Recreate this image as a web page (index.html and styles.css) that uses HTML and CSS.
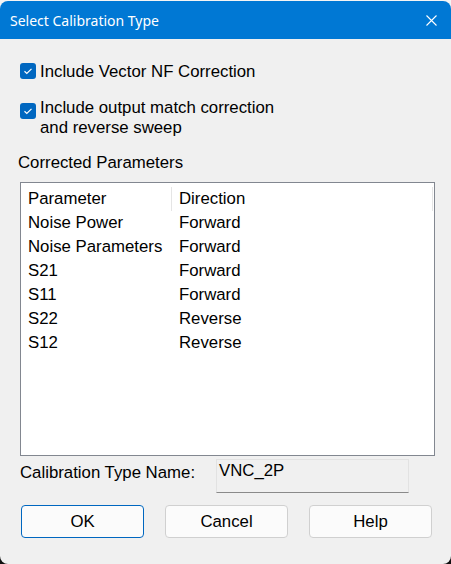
FILE: index.html
```html
<!DOCTYPE html>
<html>
<head>
<meta charset="utf-8">
<link rel="stylesheet" href="styles.css">
</head>
<body>
<div class="window">
  <div class="titlebar">
    <span class="title">Select Calibration Type</span>
    <svg class="close" width="11" height="11" viewBox="0 0 11 11"><path d="M0.5 0.5 L10.5 10.5 M10.5 0.5 L0.5 10.5" stroke="#fff" stroke-width="1.1" fill="none"/></svg>
  </div>
  <div class="content">
    <label class="check row1">
      <span class="box"><svg width="16" height="16" viewBox="0 0 16 16"><path d="M4.5 8.3 L6.8 10.5 L11.5 5.8" stroke="#fff" stroke-width="1.2" fill="none"/></svg></span>
      <span class="ctext">Include Vector NF Correction</span>
    </label>
    <label class="check row2">
      <span class="box"><svg width="16" height="16" viewBox="0 0 16 16"><path d="M4.5 8.3 L6.8 10.5 L11.5 5.8" stroke="#fff" stroke-width="1.2" fill="none"/></svg></span>
      <span class="ctext">Include output match correction<br>and reverse sweep</span>
    </label>
    <div class="section">Corrected Parameters</div>
    <div class="list">
      <div class="lrow head">
        <div class="cell h1">Parameter</div>
        <div class="cell h2">Direction</div>
      </div>
      <div class="lrow"><div class="cell">Noise Power</div><div class="cell c2">Forward</div></div>
      <div class="lrow"><div class="cell">Noise Parameters</div><div class="cell c2">Forward</div></div>
      <div class="lrow"><div class="cell">S21</div><div class="cell c2">Forward</div></div>
      <div class="lrow"><div class="cell">S11</div><div class="cell c2">Forward</div></div>
      <div class="lrow"><div class="cell">S22</div><div class="cell c2">Reverse</div></div>
      <div class="lrow"><div class="cell">S12</div><div class="cell c2">Reverse</div></div>
    </div>
    <div class="namerow">
      <div class="namelabel">Calibration Type Name:</div>
      <div class="namefield">VNC_2P</div>
    </div>
    <div class="buttons">
      <button class="btn primary">OK</button>
      <button class="btn">Cancel</button>
      <button class="btn">Help</button>
    </div>
  </div>
</div>
</body>
</html>
```
FILE: styles.css
```css
html, body {
  margin: 0;
  padding: 0;
}
body {
  width: 451px;
  height: 564px;
  overflow: hidden;
  background: linear-gradient(#f4f4f4 50%, #101010 50%);
  font-family: "Liberation Sans", Arial, sans-serif;
  font-size: 16.8px;
  color: #000;
}
.window {
  margin-top: 1px;
  height: 563px;
  background: #f0f0f0;
  border-radius: 8px;
  overflow: hidden;
  display: flex;
  flex-direction: column;
}
.titlebar {
  height: 38px;
  flex: none;
  background: #0078d4;
  display: flex;
  align-items: center;
  justify-content: space-between;
  padding: 0 14px 0 10px;
}
.title {
  font-family: "Noto Sans", "Open Sans", sans-serif;
  font-size: 14px;
  color: #fff;
  margin-top: 1px;
}
.close {
  display: block;
  margin-top: 1px;
}
.content {
  padding: 23px 0 0 20px;
  display: flex;
  flex-direction: column;
  line-height: 20px;
}
.check {
  display: flex;
  align-items: flex-start;
}
.box {
  width: 16px;
  height: 16px;
  border-radius: 3px;
  background: #0067c0;
  flex: none;
  margin-right: 4px;
}
.box svg { display: block; }
.row1 .box { margin-top: 1px; }
.row2 { margin-top: 16px; }
.row2 .box { margin-top: 5px; }
.section {
  margin-top: 15px;
  margin-left: -2px;
}
.list {
  margin-top: 9px;
  width: 413px;
  height: 268px;
  border: 1px solid #828790;
  background: #fff;
  padding-top: 4px;
  box-sizing: content-box;
}
.lrow {
  display: grid;
  grid-template-columns: 151px 261px;
  height: 24px;
  line-height: 24px;
}
.cell {
  padding-left: 7px;
  white-space: nowrap;
}
.head .h1, .head .h2 {
  border-right: 1px solid #e5e5e5;
}
.c2, .h2 { padding-left: 7px; }
.namerow {
  margin-top: 3px;
  display: flex;
}
.namelabel {
  width: 196px;
  padding-top: 4px;
}
.namefield {
  width: 189px;
  height: 31px;
  padding-left: 2px;
  padding-top: 1px;
  border: 1px solid #e2e2e2;
  border-bottom-color: #8a8a8a;
  background: #f0f0f0;
}
.buttons {
  margin-top: 12px;
  width: 412px;
  display: flex;
  justify-content: space-between;
}
.btn {
  width: 123px;
  height: 33px;
  font-family: "Liberation Sans", Arial, sans-serif;
  font-size: 16.8px;
  color: #000;
  background: #fbfbfb;
  border: 1px solid #d0d0d0;
  border-radius: 4px;
  padding: 0;
}
.btn.primary {
  border-color: #0067c0;
}
.btn:first-child { margin-left: 1px; }
```
